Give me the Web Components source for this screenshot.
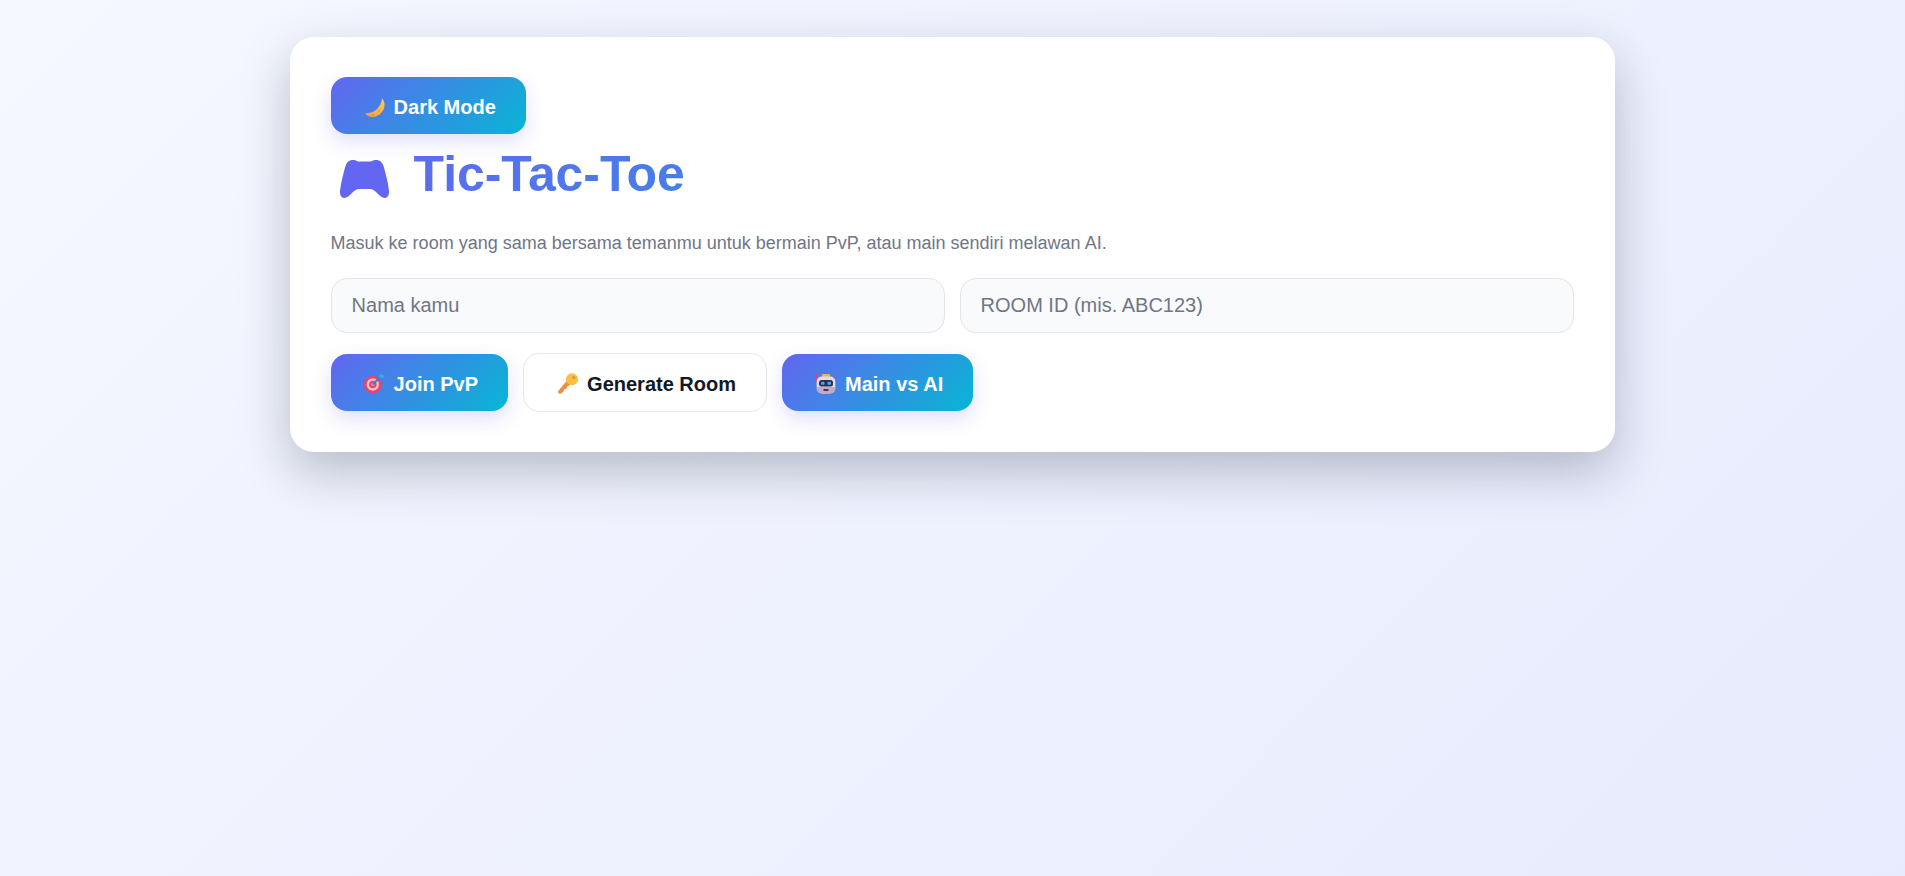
<!DOCTYPE html>
<html lang="id">
<head>
<meta charset="utf-8">
<title>Tic-Tac-Toe</title>
<style>
  html, body { height: 100%; }
  body {
    margin: 0;
    font-family: "Liberation Sans", Arial, sans-serif;
    background: linear-gradient(135deg, #f5f8ff 0%, #e8ebfd 100%);
    min-height: 100vh;
    box-sizing: border-box;
    padding: 37px 0 0;
    overflow: hidden;
  }
</style>
</head>
<body>
<game-lobby></game-lobby>

<script>
// emoji drawn by hand, box is 25x25 so the text starts at the same place on every button
const emojis = {
  moon: `<defs><linearGradient id="m" x1="0" y1="1" x2="1" y2="0"><stop offset="0" stop-color="#f49a42"/><stop offset="1" stop-color="#fdcb55"/></linearGradient></defs>
    <path fill="url(#m)" d="M21 5.500C24.500 9 24.500 15 20.500 19.500 16 24.800 8 25.800 4 20.200 10 20.400 14.500 18.200 17 14.800 19.200 12 20.800 9 21 5.500z"/>
    <circle cx="18" cy="18" r="1" fill="#e9973f"/><circle cx="12" cy="22" r=".9" fill="#de7f35"/>`,
  target: `<circle cx="11.800" cy="14.500" r="8.800" fill="#e8436a"/><circle cx="11.800" cy="14.500" r="6.200" fill="#f6bccb"/>
    <circle cx="11.800" cy="14.500" r="3.800" fill="#e2486e"/><circle cx="11.800" cy="14.500" r="1.700" fill="#a9a3b5"/>
    <path stroke="#3b7fd0" stroke-width="2" d="M12 14.300 19.500 6.800"/><path fill="#36a9e6" d="M17.500 7 19.500 3 21 5 23.800 5.500 21.500 8.500z"/>`,
  key: `<path fill="#f08c3e" d="M13 10.500l3.500 3.500-2.200 2.200-1.300-.2.100 1.700-1.500 1.500-1.700-.1.200 1.700-2.300 2.300c-1 .9-2.300.9-3.100.1-.8-.8-.8-2 .1-2.900z"/>
    <circle cx="18" cy="9.300" r="6" fill="#fbbf3f"/><circle cx="19.800" cy="7.500" r="1.500" fill="#f08c3e"/>`,
  robot: `<path stroke="#e8436a" stroke-width="1.300" fill="none" d="M4.700 4.500V11M23.300 4.500V11"/>
    <rect x="10" y="4" width="8" height="3" rx="1" fill="#f5b83d"/>
    <rect x="4.700" y="6.500" width="18.600" height="17" rx="5" fill="#e7dbe8"/>
    <path fill="#c3a9c6" d="M4.700 17h18.600v1.500a5 5 0 0 1-5 5H9.700a5 5 0 0 1-5-5z"/>
    <rect x="7" y="10" width="14" height="6.500" rx="2.500" fill="#24325a"/>
    <rect x="9" y="11.700" width="3.500" height="3" rx="1" fill="#4aa8ef"/><rect x="15.500" y="11.700" width="3.500" height="3" rx="1" fill="#4aa8ef"/>
    <rect x="11.500" y="19" width="5" height="2" rx=".6" fill="#3d3a55"/>`
};

class gameButton extends HTMLElement {
  constructor() {
    super();
    this.attachShadow({ mode: "open" });
  }
  connectedCallback() {
    const icon = emojis[this.getAttribute("icon")] || "";
    this.shadowRoot.innerHTML = `
    <style>
      :host { display: inline-block; }
      button {
        display: flex;
        align-items: center;
        height: 57px;
        padding: 0 30px;
        border: 0;
        border-radius: 16px;
        font: 700 20px "Liberation Sans", Arial, sans-serif;
        color: #fff;
        background: linear-gradient(135deg, #6366f1, #06b6d4);
        box-shadow: 0 8px 20px rgba(99, 102, 241, .2);
      }
      :host([variant="ghost"]) button {
        height: 59px;
        color: #111827;
        background: #fff;
        border: 1px solid #e5e7eb;
        box-shadow: none;
      }
      svg { width: 25px; height: 25px; margin-right: 8px; flex: none; }
      span { padding-top: 3px; }
    </style>
    <button><svg viewBox="0 0 25 25" aria-hidden="true">${icon}</svg><span><slot></slot></span></button>`;
  }
}

class gameLobby extends HTMLElement {
  constructor() {
    super();
    this.attachShadow({ mode: "open" });
  }
  connectedCallback() {
    this.shadowRoot.innerHTML = `
    <style>
      :host { display: block; width: 1325px; margin: 0 0 0 290px; }
      .card {
        box-sizing: border-box;
        padding: 40px 41.4px 40px 40.6px;
        background: #fff;
        border-radius: 24px;
        box-shadow: 0 20px 50px rgba(15, 23, 42, .25);
      }
      h1 {
        display: flex;
        align-items: center;
        gap: 18px;
        margin: 0;
        height: 80px;
        font-size: 50px;
        font-weight: 700;
        letter-spacing: -.1px;
      }
      h1 svg { width: 66px; height: 66px; flex: none; margin-left: -1px; }
      h1 span {
        color: transparent;
        background: linear-gradient(135deg, #6366f1, #06b6d4) -84px 0 / 1244px 100% no-repeat;
        -webkit-background-clip: text;
        background-clip: text;
      }
      p { margin: 15px 0 21px; font-size: 18px; line-height: 28px; color: #6f7687; }
      .inputs { display: grid; grid-template-columns: 1fr 1fr; gap: 15px; }
      input {
        box-sizing: border-box;
        width: 100%;
        height: 55px;
        padding: 0 20px;
        border: 1px solid #e2e5ea;
        border-radius: 16px;
        background: #f9fafb;
        font: 20px "Liberation Sans", Arial, sans-serif;
      }
      input::placeholder { color: #6f7687; opacity: 1; }
      .actions { display: flex; align-items: center; gap: 15px; margin-top: 20px; }
    </style>
    <section class="card">
      <game-button icon="moon">Dark Mode</game-button>
      <h1>
        <svg viewBox="0 0 66 66" aria-hidden="true"><path transform="translate(10 19)" fill="#6366f1" d="M13 0c2 0 4 .6 5 1.500h13c1-.9 3-1.500 5-1.500 4 0 6 2 7.500 6 2 7 4.500 16 5.500 25 .3 4-1.500 7-4 7-3 0-6-3-9-6-2-2-4-3-6-3H19c-2 0-4 1-6 3-3 3-6 6-9 6-2.500 0-4.300-3-4-7C1 22 3.500 13 5.500 6 7 2 9 0 13 0z"/></svg>
        <span>Tic-Tac-Toe</span>
      </h1>
      <p>Masuk ke room yang sama bersama temanmu untuk bermain PvP, atau main sendiri melawan AI.</p>
      <div class="inputs">
        <input placeholder="Nama kamu">
        <input placeholder="ROOM ID (mis. ABC123)">
      </div>
      <div class="actions">
        <game-button icon="target">Join PvP</game-button>
        <game-button icon="key" variant="ghost">Generate Room</game-button>
        <game-button icon="robot">Main vs AI</game-button>
      </div>
    </section>`;
  }
}

customElements.define("game-button", gameButton);
customElements.define("game-lobby", gameLobby);
</script>
</body>
</html>
